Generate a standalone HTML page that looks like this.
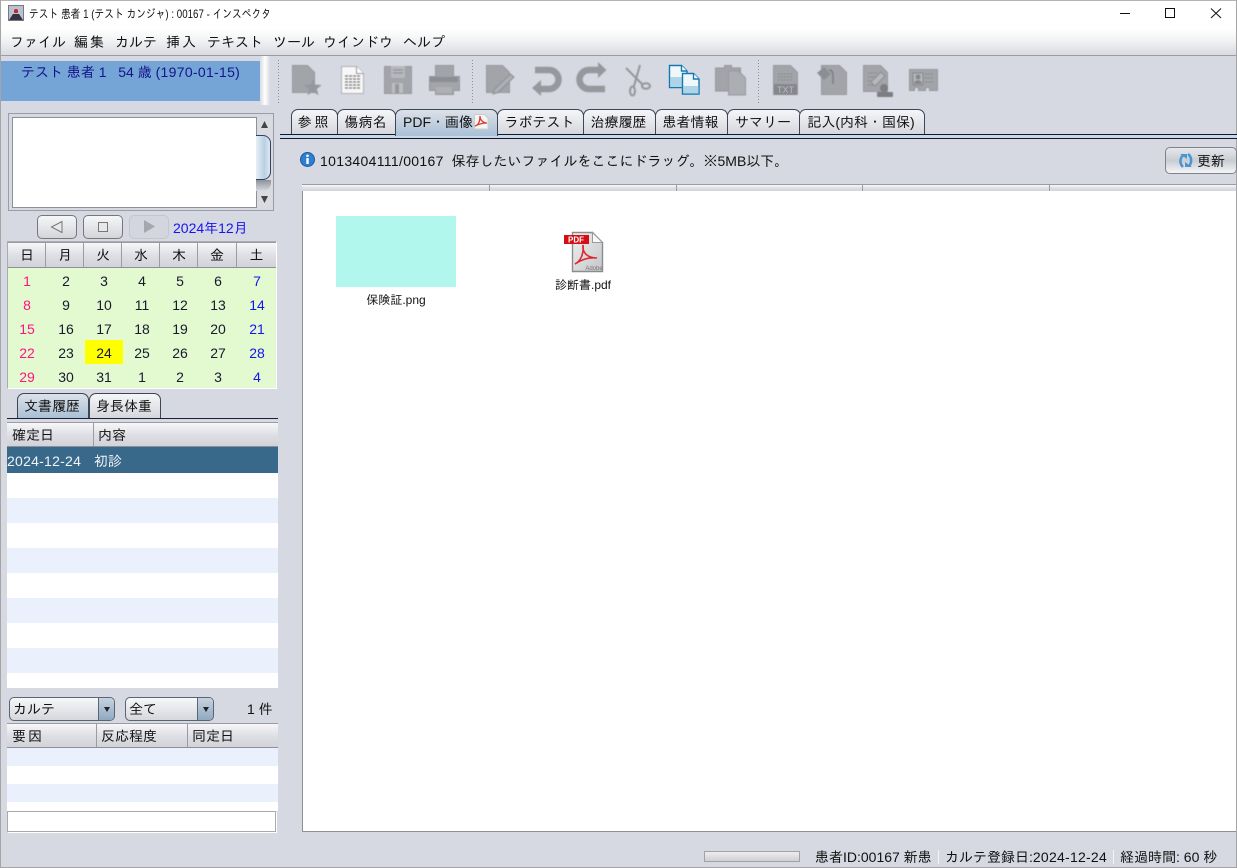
<!DOCTYPE html>
<html lang="ja"><head><meta charset="utf-8"><title>インスペクタ</title>
<style>
html,body{margin:0;padding:0}
body{width:1237px;height:868px;position:relative;overflow:hidden;background:#d6d9e2;font:14px/16px "Liberation Sans","IPAGothic","Noto Sans CJK JP",sans-serif;color:#111}
div{position:absolute;box-sizing:border-box}
.t{white-space:nowrap;line-height:16px}
.c{text-align:center}
.n{letter-spacing:.3px}
.hd{background:linear-gradient(#f7f7f9,#dcdee4 55%,#d2d4da);border-bottom:1px solid #8e9097;border-top:1px solid #9a9ca3}
.hc{border-right:1px solid #9a9ca3;top:0;bottom:0}
.tab{top:109px;height:25px;border:1px solid #3d4655;border-bottom:0;border-radius:7px 7px 0 0;background:linear-gradient(#f5f6f8,#d5d7dd);text-align:center;line-height:24px;white-space:nowrap;padding-right:2px}
.tab.on{background:linear-gradient(#dde1e8,#a9c0d6);height:27px}
.nb{top:215px;width:40px;height:24px;border:1px solid #777;border-radius:5px;background:linear-gradient(#f6f7f9,#d3d5da)}
.cb{height:24px;top:697px;border:1px solid #5a6472;border-radius:5px;background:linear-gradient(#f7f8fa,#d5d7dc);line-height:22px;padding-left:3px}
.ar{right:0;top:0;width:16px;height:22px;background:linear-gradient(#c6d3e0,#90a9c1);border-left:1px solid #5a6472;border-radius:0 4px 4px 0}
.ar:after{content:"";position:absolute;left:5px;top:9px;border:3px solid transparent;border-top:5px solid #222;border-bottom:0}
</style></head><body>

<div style="left:0;top:0;width:1237px;height:29px;background:#fff"></div>
<div style="left:0;top:29px;width:1237px;height:27px;background:linear-gradient(#fff,#f3f4f6 40%,#d9dbe0);border-bottom:1px solid #9b9da4"></div>
<div style="left:0;top:0;width:1237px;height:1px;background:#b5b5b5"></div>
<div style="left:0;top:0;width:1px;height:868px;background:#a5a5a5"></div>
<div style="left:1236px;top:0;width:1px;height:868px;background:#a5a5a5"></div>
<div style="left:0;top:867px;width:1237px;height:1px;background:#a5a5a5"></div>

<svg style="position:absolute;left:8px;top:5px" width="16" height="16" viewBox="0 0 16 16"><rect x="0.5" y="0.5" width="15" height="15" fill="#b9c2d0" stroke="#778"/><path d="M1 15L5 9h6l4 6z" fill="#334"/><path d="M6 8l2-3 2 3z" fill="#445"/><circle cx="8" cy="6" r="2" fill="#c22"/></svg>
<div class="t" style="left:29px;top:6px;font-size:12px;transform:scaleX(.812);transform-origin:0 0">テスト 患者 1 (テスト カンジャ) : 00167 - インスペクタ</div>
<svg style="position:absolute;left:1110px;top:0" width="127" height="29" fill="none" stroke="#111"><path d="M10 13.500h10"/><rect x="55.500" y="8.500" width="9" height="9"/><path d="M101 8.500l10 9.500M111 8.500l-10 9.500"/></svg>

<div class="t" style="left:10px;top:34px">ファイル</div>
<div class="t" style="left:74px;top:34px;letter-spacing:2px">編集</div>
<div class="t" style="left:115px;top:34px">カルテ</div>
<div class="t" style="left:166px;top:34px;letter-spacing:2px">挿入</div>
<div class="t" style="left:207px;top:34px">テキスト</div>
<div class="t" style="left:273px;top:34px">ツール</div>
<div class="t" style="left:323px;top:34px">ウインドウ</div>
<div class="t" style="left:403px;top:34px">ヘルプ</div>

<div style="left:1px;top:61px;width:259px;height:40px;background:#74a5d6"></div>
<div style="left:260px;top:56px;width:10px;height:49px;background:linear-gradient(90deg,#d8dae0,#fff 50%,#d8dae0)"></div>
<div class="t" style="left:21px;top:64px;color:#14148c">テスト 患者 1 &nbsp;&nbsp;54 歳 <span class="n">(1970-01-15)</span></div>

<div style="left:8px;top:113px;width:266px;height:98px;background:#fff;border:1px solid #9a9ca6"></div>
<div style="left:9px;top:114px;width:264px;height:96px;background:#d6d9e2"></div>
<div style="left:12px;top:117px;width:245px;height:91px;background:#fff;border:1px solid #8d8f99"></div>
<div style="left:257px;top:117px;width:15px;height:91px;background:#d9dbe1"></div>
<div style="left:256px;top:135px;width:15px;height:45px;background:linear-gradient(90deg,#e8eff6,#b9d0e2 60%,#dfe8f0);border:1px solid #2d4360;border-left:0;border-radius:0 8px 8px 0"></div>
<div style="left:256px;top:180px;width:15px;height:11px;background:linear-gradient(#8f9197,#d6d9e2);border-radius:0 0 8px 0"></div>
<svg style="position:absolute;left:257px;top:118px" width="15" height="90" fill="#444"><path d="M4 10L7.500 3l3.500 7zM4 78l3.500 7 3.500-7z"/></svg>

<div class="nb" style="left:37px"></div><div class="nb" style="left:83px"></div><div class="nb" style="left:129px;background:#d3d6de;border-color:#c4c6cd"></div>
<svg style="position:absolute;left:37px;top:215px" width="132" height="24"><path d="M25 6.500v11L14.500 12z" fill="#e8e9ec" stroke="#777"/><rect x="61.500" y="7.500" width="9" height="9" fill="#e8e8e8" stroke="#777"/><path d="M107 5v13l11-6.500z" fill="#a5a7ad"/></svg>
<div class="t" style="left:173px;top:220px;color:#1414f0">2024年12月</div>

<div style="left:7px;top:241px;width:270px;height:148px;background:#e3fad0;border:1px solid #aaacb3;border-bottom-color:#fff;border-right-color:#fff"></div>
<div class="hd" style="left:8px;top:242px;width:268px;height:26px">
<div class="hc" style="left:0;width:38px"></div><div class="hc" style="left:38px;width:38px"></div><div class="hc" style="left:76px;width:38px"></div><div class="hc" style="left:114px;width:38px"></div><div class="hc" style="left:152px;width:38px"></div><div class="hc" style="left:190px;width:39px"></div></div>
<div class="t c" style="left:8px;top:247px;width:38px">日</div><div class="t c" style="left:46px;top:247px;width:38px">月</div><div class="t c" style="left:84px;top:247px;width:38px">火</div><div class="t c" style="left:122px;top:247px;width:38px">水</div><div class="t c" style="left:160px;top:247px;width:38px">木</div><div class="t c" style="left:198px;top:247px;width:38px">金</div><div class="t c" style="left:237px;top:247px;width:39px">土</div>
<div style="left:85px;top:340px;width:38px;height:24px;background:#ff0"></div>

<svg style="position:absolute;left:0;top:0" width="280" height="400" font-size="14" text-anchor="middle" font-family="Liberation Sans,sans-serif" fill="#18182e">
<g fill="#ff1480"><text x="27" y="286">1</text><text x="27" y="310">8</text><text x="27" y="334">15</text><text x="27" y="358">22</text><text x="27" y="382">29</text></g>
<g><text x="66" y="286">2</text><text x="104" y="286">3</text><text x="142" y="286">4</text><text x="180" y="286">5</text><text x="218" y="286">6</text>
<text x="66" y="310">9</text><text x="104" y="310">10</text><text x="142" y="310">11</text><text x="180" y="310">12</text><text x="218" y="310">13</text>
<text x="66" y="334">16</text><text x="104" y="334">17</text><text x="142" y="334">18</text><text x="180" y="334">19</text><text x="218" y="334">20</text>
<text x="66" y="358">23</text><text x="104" y="358">24</text><text x="142" y="358">25</text><text x="180" y="358">26</text><text x="218" y="358">27</text>
<text x="66" y="382">30</text><text x="104" y="382">31</text><text x="142" y="382">1</text><text x="180" y="382">2</text><text x="218" y="382">3</text></g>
<g fill="#1414f0"><text x="257" y="286">7</text><text x="257" y="310">14</text><text x="257" y="334">21</text><text x="257" y="358">28</text><text x="257" y="382">4</text></g>
</svg>

<div class="tab on" style="left:17px;top:393px;width:72px;height:25px">文書履歴</div>
<div class="tab" style="left:89px;top:393px;width:72px;height:25px">身長体重</div>
<div style="left:7px;top:418px;width:271px;height:5px;background:#d6d9e2;border-top:1px solid #1a2030"></div>

<div class="hd" style="left:7px;top:422px;width:271px;height:25px"><div class="hc" style="left:0;width:87px"></div></div>
<div class="t" style="left:12px;top:427px">確定日</div><div class="t" style="left:98px;top:427px">内容</div>
<div style="left:7px;top:447px;width:271px;height:26px;background:#38688a"></div>
<div class="t" style="left:7px;top:453px;color:#f2f5f8;letter-spacing:.25px">2024-12-24</div><div class="t" style="left:94px;top:453px;color:#f2f5f8">初診</div>
<div style="left:7px;top:473px;width:271px;height:215px;background:repeating-linear-gradient(#fff 0 25px,#ebf1fc 25px 50px)"></div>

<div class="cb" style="left:9px;width:106px">カルテ<div class="ar"></div></div>
<div class="cb" style="left:125px;width:89px">全て<div class="ar"></div></div>
<div class="t" style="left:247px;top:701px">1 件</div>

<div class="hd" style="left:7px;top:723px;width:271px;height:25px"><div class="hc" style="left:0;width:90px"></div><div class="hc" style="left:90px;width:91px"></div></div>
<div class="t" style="left:12px;top:728px;letter-spacing:2px">要因</div><div class="t" style="left:101px;top:728px">反応程度</div><div class="t" style="left:192px;top:728px">同定日</div>
<div style="left:7px;top:748px;width:271px;height:63px;background:repeating-linear-gradient(#ebf1fc 0 18px,#fff 18px 36px)"></div>
<div style="left:7px;top:811px;width:269px;height:21px;background:#fff;border:1px solid #aaa;box-shadow:1px 1px 0 #fff"></div>

<svg style="position:absolute;left:0;top:56px" width="1000" height="50" viewBox="0 56 1000 50">
<g fill="none" stroke="#8f9197" stroke-dasharray="1 2"><path d="M278.500 60v43M472.500 60v43M758.500 60v43"/></g>
<g style="filter:blur(.4px)">
<g fill="#a2a4a9" stroke="#96989d">
<path d="M292.500 65.500h15l7 7v20h-22z"/><path d="M313 80l2 5 5.500.4-4.200 3.500 1.400 5.300-4.700-3-4.700 3 1.400-5.300-4.200-3.500 5.500-.4z" fill="#96989d"/>
<path d="M384.500 66.500h27v27h-27z"/>
<path d="M429.500 76.500h6v-11h18v11h6v14h-6v4h-18v-4h-6z"/>
<path d="M486.500 65.500h16l7 7v20h-23z"/>
</g>
<path d="M341.500 66.500h15l7 7v20h-22z" fill="#f7f7f7" stroke="#b0b2b7"/><path d="M356.500 66.500v7h7" fill="#fff" stroke="#999"/>
<path d="M345 76h15M345 79h15M345 82h15M345 85h15M345 88h15" stroke="#777" stroke-dasharray="3 1" stroke-width="1.200"/>
<rect x="391" y="66" width="14" height="12" fill="#b6b8bd"/><rect x="392" y="83" width="11" height="10" fill="#bbbdc2"/><rect x="395" y="84" width="4" height="9" fill="#96989d"/>
<path d="M393 70h10M393 73h10" stroke="#8c8e93"/><path d="M430 77h28v5h-28z" fill="#8c8e93"/><path d="M436 87h16v6h-16z" fill="#aeb0b5"/>
<path d="M514 77L498 92.500l-5 1.500 1.500-5 16-15z" fill="#adafb4" stroke="#8c8e93"/>

<g fill="none" stroke="#96989d" stroke-width="6.500">
<path d="M535 70h14a9.500 9.500 0 0 1 0 19h-10"/><path d="M605 89h-16a9.500 9.500 0 0 1 0-19h10"/></g>
<path d="M541 80v16l-9-8zM598 62v16l8.500-8z" fill="#96989d"/>

<g fill="none" stroke="#94969b" stroke-width="2"><path d="M626 68l14 14 3 3M640 65l-4 14-2 7"/><ellipse cx="646" cy="86" rx="4" ry="2.800"/><ellipse cx="632.500" cy="91" rx="2.500" ry="4.500"/></g>

<g fill="#a2a4a9" stroke="#96989d"><path d="M715.500 68h9v-2.500h7v2.500h9v23h-25z"/><path d="M728.500 71h10l7 7v17h-17z" fill="#acaeb3"/>
<path d="M773.500 65.500h17l7 7v22h-24z"/><path d="M821.500 65.500h18l7 7v22h-25z"/><path d="M863.500 65.500h17l7 7v19h-24z"/><path d="M909.500 69.500h28v21h-8v-3h-4v3h-7v-3h-4v3h-5z"/></g>
<rect x="774" y="84" width="23" height="11" fill="#85878c"/>
<path d="M778 74h15M778 77h15M778 80h15M868 73h10M868 77h10M868 81h8M868 85h8M925 74h9M925 78h9M925 82h9" stroke="#85878c" stroke-dasharray="2 1"/>
<path d="M817 73l7-6 7 7-7 6z" fill="#8c8e93"/><path d="M829 70c4 0 4 4 4 7v7" fill="none" stroke="#7c7e83" stroke-width="1.500"/>
<path d="M871 82l10-10 4 4-10 10z" fill="#b6b8bd" stroke="#8c8e93"/>
<circle cx="884" cy="88" r="4" fill="#7c7e83"/><rect x="877" y="92" width="16" height="5" rx="1" fill="#7c7e83"/>
<rect x="913" y="73" width="10" height="12" fill="#b6b8bd" stroke="#85878c"/><circle cx="918" cy="77" r="2.500" fill="#85878c"/><path d="M914 84c0-5 8-5 8 0z" fill="#85878c"/>
</g>
<text x="785.500" y="93" font-family="Liberation Sans" font-size="9" text-anchor="middle" fill="#b9bbc0">TXT</text>
<g stroke="#1479b0" stroke-width="1.400">
<path d="M669.500 65.500h12l5.500 5.500v16.500h-17.500z" fill="#f0f7fb"/><path d="M670.500 77h16v10h-16z" fill="#aed4e8" stroke="none"/><path d="M681.500 65.500v5.500h5.500" fill="#fff"/>
<path d="M682.500 73.500h11l5.500 5.500v15h-16.500z" fill="#f0f7fb"/><path d="M683.500 86h15v7.500h-15z" fill="#aed4e8" stroke="none"/><path d="M693.500 73.500v5.500h5.500" fill="#fff"/></g>
</svg>

<div class="tab" style="left:291px;width:47px;letter-spacing:3px;padding-right:0">参照</div>
<div class="tab" style="left:337px;width:59px">傷病名</div>
<div style="left:280px;top:134px;width:957px;height:5px;background:#c9d8e8;border-top:1px solid #10182a;border-bottom:1px solid #10182a"></div>
<div class="tab on" style="left:395px;width:103px;text-align:left;padding-left:7px">PDF・画像</div>
<svg style="position:absolute;left:473px;top:113px" width="16" height="17"><path d="M1.500 1.500h10l3.500 3.500v11h-13.500z" fill="#f4f4f4" stroke="#ccc"/><path d="M2 13c4-1 5-5 5-10 0 4 3 7 7 7-4 0-8 1-12 3z" fill="none" stroke="#d83c32" stroke-width="1.300"/></svg>
<div class="tab" style="left:497px;width:87px">ラボテスト</div>
<div class="tab" style="left:583px;width:73px">治療履歴</div>
<div class="tab" style="left:655px;width:73px">患者情報</div>
<div class="tab" style="left:727px;width:74px">サマリー</div>
<div class="tab" style="left:799px;width:126px">記入(内科・国保)</div>

<svg style="position:absolute;left:300px;top:152px" width="16" height="16"><circle cx="7.500" cy="7.500" r="7" fill="#2f7fd0" stroke="#1b5aa0"/><circle cx="7.500" cy="3.800" r="1.300" fill="#fff"/><rect x="6.300" y="6" width="2.400" height="6" fill="#fff"/></svg>
<div class="t" style="left:320px;top:153px"><span style="letter-spacing:.32px">1013404111/00167</span> &nbsp;保存したいファイルをここにドラッグ。※5MB以下。</div>

<div style="left:1165px;top:147px;width:72px;height:27px;border:1px solid #80828a;border-radius:5px;background:linear-gradient(#e6e8ec,#c9ccd3 50%,#f4f5f7)"></div>
<svg style="position:absolute;left:1177px;top:152px" width="18" height="17" fill="none" stroke="#4a96d2" stroke-width="2.600"><path d="M7 3C3 5 2 11 6 15M11 2c4 3 4 9 1 12"/><path d="M3 2h7v5zM15 15H8v-5z" fill="#4a96d2" stroke="none"/></svg>
<div class="t" style="left:1197px;top:153px">更新</div>

<div style="left:302px;top:184px;width:934px;height:648px;background:#fff;border:1px solid #8e9097;border-right:0"></div>
<div class="hd" style="left:302px;top:184px;width:934px;height:7px;border-bottom:0"><div style="left:187px;top:0;height:6px;width:1px;background:#9a9ca3"></div><div style="left:374px;top:0;height:6px;width:1px;background:#9a9ca3"></div><div style="left:560px;top:0;height:6px;width:1px;background:#9a9ca3"></div><div style="left:747px;top:0;height:6px;width:1px;background:#9a9ca3"></div></div>

<div style="left:336px;top:216px;width:120px;height:71px;background:#b1f7ee"></div>
<div class="t c" style="left:336px;top:292px;width:120px;font-size:12px">保険証.png</div>

<svg style="position:absolute;left:560px;top:228px" width="46" height="46"><defs><linearGradient id="pg" x1="0" y1="0" x2="1" y2="1"><stop offset="0" stop-color="#f0f0f0"/><stop offset="1" stop-color="#c4c6c8"/></linearGradient></defs><path d="M12.500 4.500h20l10 10v29h-30z" fill="url(#pg)" stroke="#8a8c8e" stroke-width="1.400"/><path d="M32.500 4.500l10 10h-10z" fill="#fafafa" stroke="#999"/><rect x="4" y="7" width="25" height="9" fill="#d40f14"/><text x="16" y="14.500" font-family="Liberation Sans" font-weight="bold" font-size="8" text-anchor="middle" fill="#fff">PDF</text><path d="M15 36c6-3 9-11 8-19-1 8 5 13 14 13-8-1-15 1-22 6z" fill="none" stroke="#dd2a30" stroke-width="1.600"/><text x="34" y="42" font-family="Liberation Sans" font-size="6" text-anchor="middle" fill="#777">Adobe</text></svg>
<div class="t c" style="left:543px;top:277px;width:80px;font-size:12px">診断書.pdf</div>

<div style="left:704px;top:851px;width:96px;height:11px;background:linear-gradient(#ededef,#cfd0d4);border:1px solid #a2a3a8"></div>
<div class="t" style="left:815px;top:849px">患者ID:00167 新患</div>
<div style="left:938px;top:850px;width:1px;height:14px;background:#f4f5f7"></div>
<div class="t" style="left:945px;top:849px">カルテ登録日:<span style="letter-spacing:.25px">2024-12-24</span></div>
<div style="left:1113px;top:850px;width:1px;height:14px;background:#f4f5f7"></div>
<div class="t" style="left:1120px;top:849px">経過時間: 60 秒</div>
</body></html>
